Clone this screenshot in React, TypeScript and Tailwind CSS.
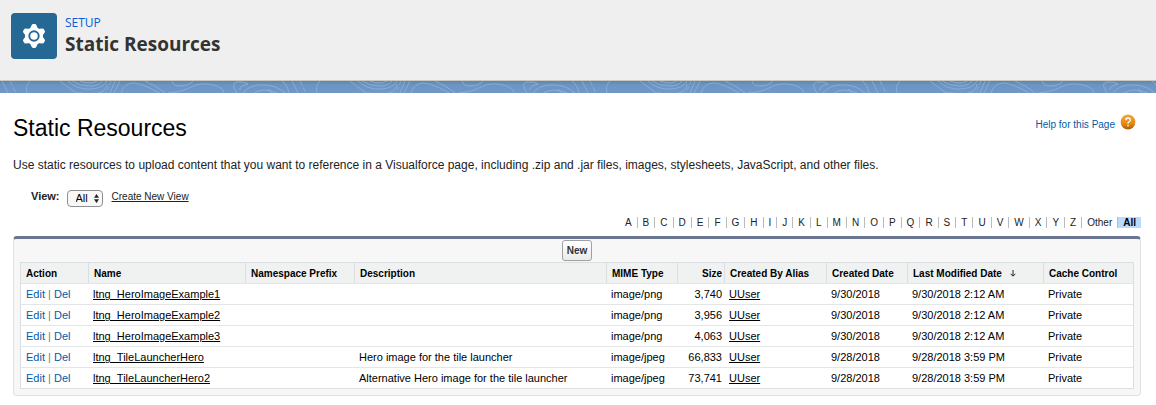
import React from "react";

type Resource = {
  name: string;
  description: string;
  mime: string;
  size: string;
  created: string;
  modified: string;
};

const resources: Resource[] = [
  { name: "ltng_HeroImageExample1", description: "", mime: "image/png", size: "3,740", created: "9/30/2018", modified: "9/30/2018 2:12 AM" },
  { name: "ltng_HeroImageExample2", description: "", mime: "image/png", size: "3,956", created: "9/30/2018", modified: "9/30/2018 2:12 AM" },
  { name: "ltng_HeroImageExample3", description: "", mime: "image/png", size: "4,063", created: "9/30/2018", modified: "9/30/2018 2:12 AM" },
  { name: "ltng_TileLauncherHero", description: "Hero image for the tile launcher", mime: "image/jpeg", size: "66,833", created: "9/28/2018", modified: "9/28/2018 3:59 PM" },
  { name: "ltng_TileLauncherHero2", description: "Alternative Hero image for the tile launcher", mime: "image/jpeg", size: "73,741", created: "9/28/2018", modified: "9/28/2018 3:59 PM" },
];

const letters = "ABCDEFGHIJKLMNOPQRSTUVWXYZ".split("");

function GearIcon() {
  return (
    <svg viewBox="0 0 24 24" className="size-6" aria-hidden="true">
      <g fill="#fff">
        <circle cx="12" cy="12" r="9" />
        {[0, 60, 120, 180, 240, 300].map((a) => (
          <path key={a} d="M8 5 L9.6 1.2 Q10 0.1 11.1 0.1 H12.9 Q14 0.1 14.4 1.2 L16 5 Z" transform={`rotate(${a} 12 12)`} />
        ))}
      </g>
      <circle cx="12" cy="12" r="4.7" fill="none" stroke="#266894" strokeWidth="1.9" />
    </svg>
  );
}

function ContourBand() {
  return (
    <div className="h-3 bg-linear-to-b from-[#5f85b0] via-[#6b94c4] via-30% to-[#7199c8]">
      <svg className="block h-3 w-full" aria-hidden="true">
        <defs>
          <pattern id="contours" width="290" height="12" patternUnits="userSpaceOnUse">
            <g fill="none" stroke="#9bbadb" strokeOpacity="0.6" strokeWidth="1">
              <path d="M2 0 L8 12" />
              <path d="M10 0 L16 12" strokeDasharray="5 2" />
              <path d="M30 0 Q25 5 27 12" />
              <path d="M60 0 L76 12 H82" />
              <path d="M68 0 Q78 9 90 8 Q102 8 107 0" />
              <path d="M72 0 Q80 5 90 5 Q98 5 102 0" />
              <path d="M80 0 Q90 4 97 0" />
              <path d="M98 12 Q106 11 107 3" />
              <path d="M111 0 L106 12" strokeDasharray="4 2" />
              <path d="M115 0 L110 12" />
              <path d="M120 0 L114 12" />
              <path d="M121 12 Q124 2 134 2 Q144 3 159 12" />
              <path d="M145 0 Q157 5 165 12" />
              <path d="M172 0 Q173 5 180 5 Q189 5 193 0" />
              <path d="M168 12 Q182 11 191 6 Q200 1 213 4 Q223 6 224 12" />
              <path d="M237 12 Q230 2 237 1 Q247 1 248 3 Q239 5 240 9" />
              <path d="M243 12 Q250 3 264 4 Q276 4 285 12" />
              <path d="M254 12 Q263 6 277 12" />
              <path d="M268 8 L272 12" />
              <path d="M282 0 Q287 3 289 12" />
            </g>
          </pattern>
        </defs>
        <rect width="100%" height="12" fill="url(#contours)" />
      </svg>
    </div>
  );
}

function HelpIcon() {
  return (
    <svg viewBox="0 0 16 16" className="size-4" aria-hidden="true">
      <defs>
        <linearGradient id="help" x1="0" y1="0" x2="0" y2="1">
          <stop offset="0" stopColor="#f0a83c" />
          <stop offset="0.6" stopColor="#e68a12" />
          <stop offset="1" stopColor="#a85f0c" />
        </linearGradient>
      </defs>
      <circle cx="8" cy="8" r="7.4" fill="url(#help)" />
      <path d="M5.8 6.2 Q5.8 4 8 4 Q10.3 4 10.3 6 Q10.3 7.1 9.1 7.8 Q8 8.4 8 9.6" fill="none" stroke="#fff" strokeWidth="1.3" />
      <rect x="7.3" y="10.8" width="1.4" height="1.5" fill="#fff" />
    </svg>
  );
}

const th = "h-5 border-l border-[#dbdfe2] px-[5px] py-0 text-left font-bold text-[10px] whitespace-nowrap first:border-l-0";
const td = "h-[21px] border-t border-[#e3e5e6] px-[5px] pt-px pb-0 whitespace-nowrap";

export default function App() {
  return (
    <div className="bg-white font-['Liberation_Sans',Arial,sans-serif] text-[11px] text-[#222]">
      <header className="flex h-[81px] border-b border-[#c9c9bf] bg-[#efefef] pt-[13px] pl-[11px]">
        <div className="flex size-[46px] items-center justify-center rounded bg-[#266894]">
          <GearIcon />
        </div>
        <div className="ml-2 font-['Open_Sans',sans-serif]">
          <div className="mt-[2px] text-[12px] leading-4 text-[#0b5cd0]">SETUP</div>
          <div className="mt-px text-[19px] leading-6 font-bold text-[#333]">Static Resources</div>
        </div>
      </header>
      <ContourBand />

      <main className="px-[13px] pt-[21px] pb-2">
        <div className="flex items-start justify-between">
          <h1 className="text-[23px] leading-7 text-black">Static Resources</h1>
          <a href="#help" className="mr-[7px] flex items-start gap-[5px] text-[10px] leading-4 text-[#015ba7]">
            <span className="pt-[3px]">Help for this Page</span>
            <HelpIcon />
          </a>
        </div>
        <p className="mt-[15px] text-[12px] leading-4">
          Use static resources to upload content that you want to reference in a Visualforce page, including .zip and .jar files, images, stylesheets, JavaScript, and other files.
        </p>

        <div className="mt-4 flex h-[18px] items-center pl-[18px]">
          <label htmlFor="view" className="mr-[7px] pb-1 font-bold">View:</label>
          <div className="relative flex">
            <select id="view" className="h-[17px] w-[36px] appearance-none rounded-[4px] border border-[#8f8f8f] bg-[#f8f8f8] pl-2 text-[11px] leading-[15px] text-black" defaultValue="All">
              <option>All</option>
            </select>
            <svg viewBox="0 0 5 9" className="pointer-events-none absolute top-1 right-1 h-[9px] w-[5px]" aria-hidden="true">
              <path d="M0 3.8 L2.5 0 L5 3.8 Z M0 5.2 L2.5 9 L5 5.2 Z" fill="#222" />
            </svg>
          </div>
          <a href="#new-view" className="ml-[9px] pb-1 text-[10px] underline">Create New View</a>
        </div>

        <nav className="mt-[10px] mr-[2px] flex h-[11px] items-center justify-end text-[10px] leading-[11px]" aria-label="Filter by letter">
          {letters.map((l) => (
            <a key={l} href={`#${l}`} className="border-r border-[#bbb] px-[5px]">{l}</a>
          ))}
          <a href="#other" className="border-r border-[#bbb] px-[5px]">Other</a>
          <a href="#all" className="bg-[#bbdaff] px-[5px] font-bold text-black">All</a>
        </nav>

        <section className="mt-2 mr-[2px] rounded border border-t-[3px] border-[#dfe1e4] border-t-[#697591] bg-[#f7f7f7] px-[6px] pb-[6px]">
          <div className="flex h-[23px] items-center justify-center">
            <button className="h-[21px] rounded-[3px] border border-[#a0a0a0] bg-linear-to-b from-white to-[#ebebeb] px-1 text-[10px] font-bold text-[#333]">New</button>
          </div>
          <table className="w-full table-fixed border-separate border-spacing-0 border border-[#dbdfe2] bg-white text-black">
            <colgroup>
              <col className="w-[67px]" />
              <col className="w-[157px]" />
              <col className="w-[109px]" />
              <col />
              <col className="w-[71px]" />
              <col className="w-[47px]" />
              <col className="w-[102px]" />
              <col className="w-[81px]" />
              <col className="w-[136px]" />
              <col className="w-[90px]" />
            </colgroup>
            <thead className="bg-[#f0f2f2]">
              <tr>
                <th className={th}>Action</th>
                <th className={th}>Name</th>
                <th className={th}>Namespace Prefix</th>
                <th className={th}>Description</th>
                <th className={th}>MIME Type</th>
                <th className={`${th} pr-[2px]`}><div className="text-right">Size</div></th>
                <th className={th}>Created By Alias</th>
                <th className={th}>Created Date</th>
                <th className={th}>
                  <div className="flex items-center gap-2">
                    Last Modified Date
                    <svg viewBox="0 0 6 7" className="h-[7px] w-[6px]" aria-hidden="true">
                      <path d="M3 0 V6 M0.7 3.8 L3 6.2 L5.3 3.8" fill="none" stroke="#222" strokeWidth="1" />
                    </svg>
                  </div>
                </th>
                <th className={th}>Cache Control</th>
              </tr>
            </thead>
            <tbody>
              {resources.map((r) => (
                <tr key={r.name}>
                  <td className={`${td} text-[#777]`}>
                    <a href="#edit" className="text-[#015ba7]">Edit</a> | <a href="#del" className="text-[#015ba7]">Del</a>
                  </td>
                  <td className={td}><a href={`#${r.name}`} className="underline">{r.name}</a></td>
                  <td className={td}></td>
                  <td className={td}>{r.description}</td>
                  <td className={td}>{r.mime}</td>
                  <td className={`${td} pr-[2px] text-right`}>{r.size}</td>
                  <td className={td}><a href="#user" className="underline">UUser</a></td>
                  <td className={td}>{r.created}</td>
                  <td className={td}>{r.modified}</td>
                  <td className={td}>Private</td>
                </tr>
              ))}
            </tbody>
          </table>
        </section>
      </main>
    </div>
  );
}
